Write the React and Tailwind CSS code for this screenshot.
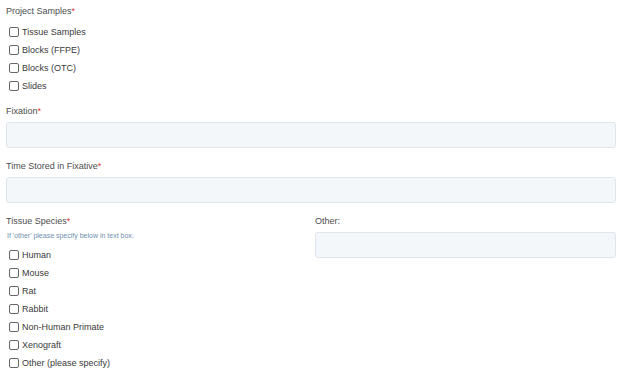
const PROJECT_SAMPLES = ["Tissue Samples", "Blocks (FFPE)", "Blocks (OTC)", "Slides"];
const SPECIES = ["Human", "Mouse", "Rat", "Rabbit", "Non-Human Primate", "Xenograft", "Other (please specify)"];

function Label({ children, required }) {
  return (
    <div className="text-[9px] leading-[12px] text-[#4d4d4d]">
      {children}
      {required && <span className="text-[#e3342f]">*</span>}
    </div>
  );
}

function Check({ label }) {
  return (
    <label className="flex items-center h-[18px] pl-[3px] gap-[3px]">
      <span className="w-[10px] h-[10px] border border-[#666] rounded-[2px] bg-white shrink-0" />
      <span className="text-[9px] leading-[12px] text-[#3a3a3a]">{label}</span>
    </label>
  );
}

function Field() {
  return <div className="h-[26px] rounded-[3px] border border-[#dfe5ed] bg-[#f4f7fa]" />;
}

export default function App() {
  return (
    <div className="w-[624px] h-[378px] bg-white px-[6px] pt-[5px] font-['Liberation_Sans',Arial,sans-serif] overflow-hidden">
      <div className="w-[610px]">
        <Label required>Project Samples</Label>
        <div className="mt-[6px] flex flex-col">
          {PROJECT_SAMPLES.map((s) => (
            <Check key={s} label={s} />
          ))}
        </div>

        <div className="mt-[10px]">
          <Label required>Fixation</Label>
        </div>
        <div className="mt-[5px]">
          <Field />
        </div>

        <div className="mt-[12px]">
          <Label required>Time Stored in Fixative</Label>
        </div>
        <div className="mt-[5px]">
          <Field />
        </div>

        <div className="mt-[12px] grid grid-cols-2 gap-x-[8px]">
          <div>
            <Label required>Tissue Species</Label>
            <div className="mt-[5px] pl-px text-[7px] leading-[8px] text-[#6f8fb0]">
              If 'other' please specify below in text box.
            </div>
            <div className="mt-[6px] flex flex-col">
              {SPECIES.map((s) => (
                <Check key={s} label={s} />
              ))}
            </div>
          </div>
          <div>
            <Label>Other:</Label>
            <div className="mt-[5px]">
              <Field />
            </div>
          </div>
        </div>
      </div>
    </div>
  );
}
